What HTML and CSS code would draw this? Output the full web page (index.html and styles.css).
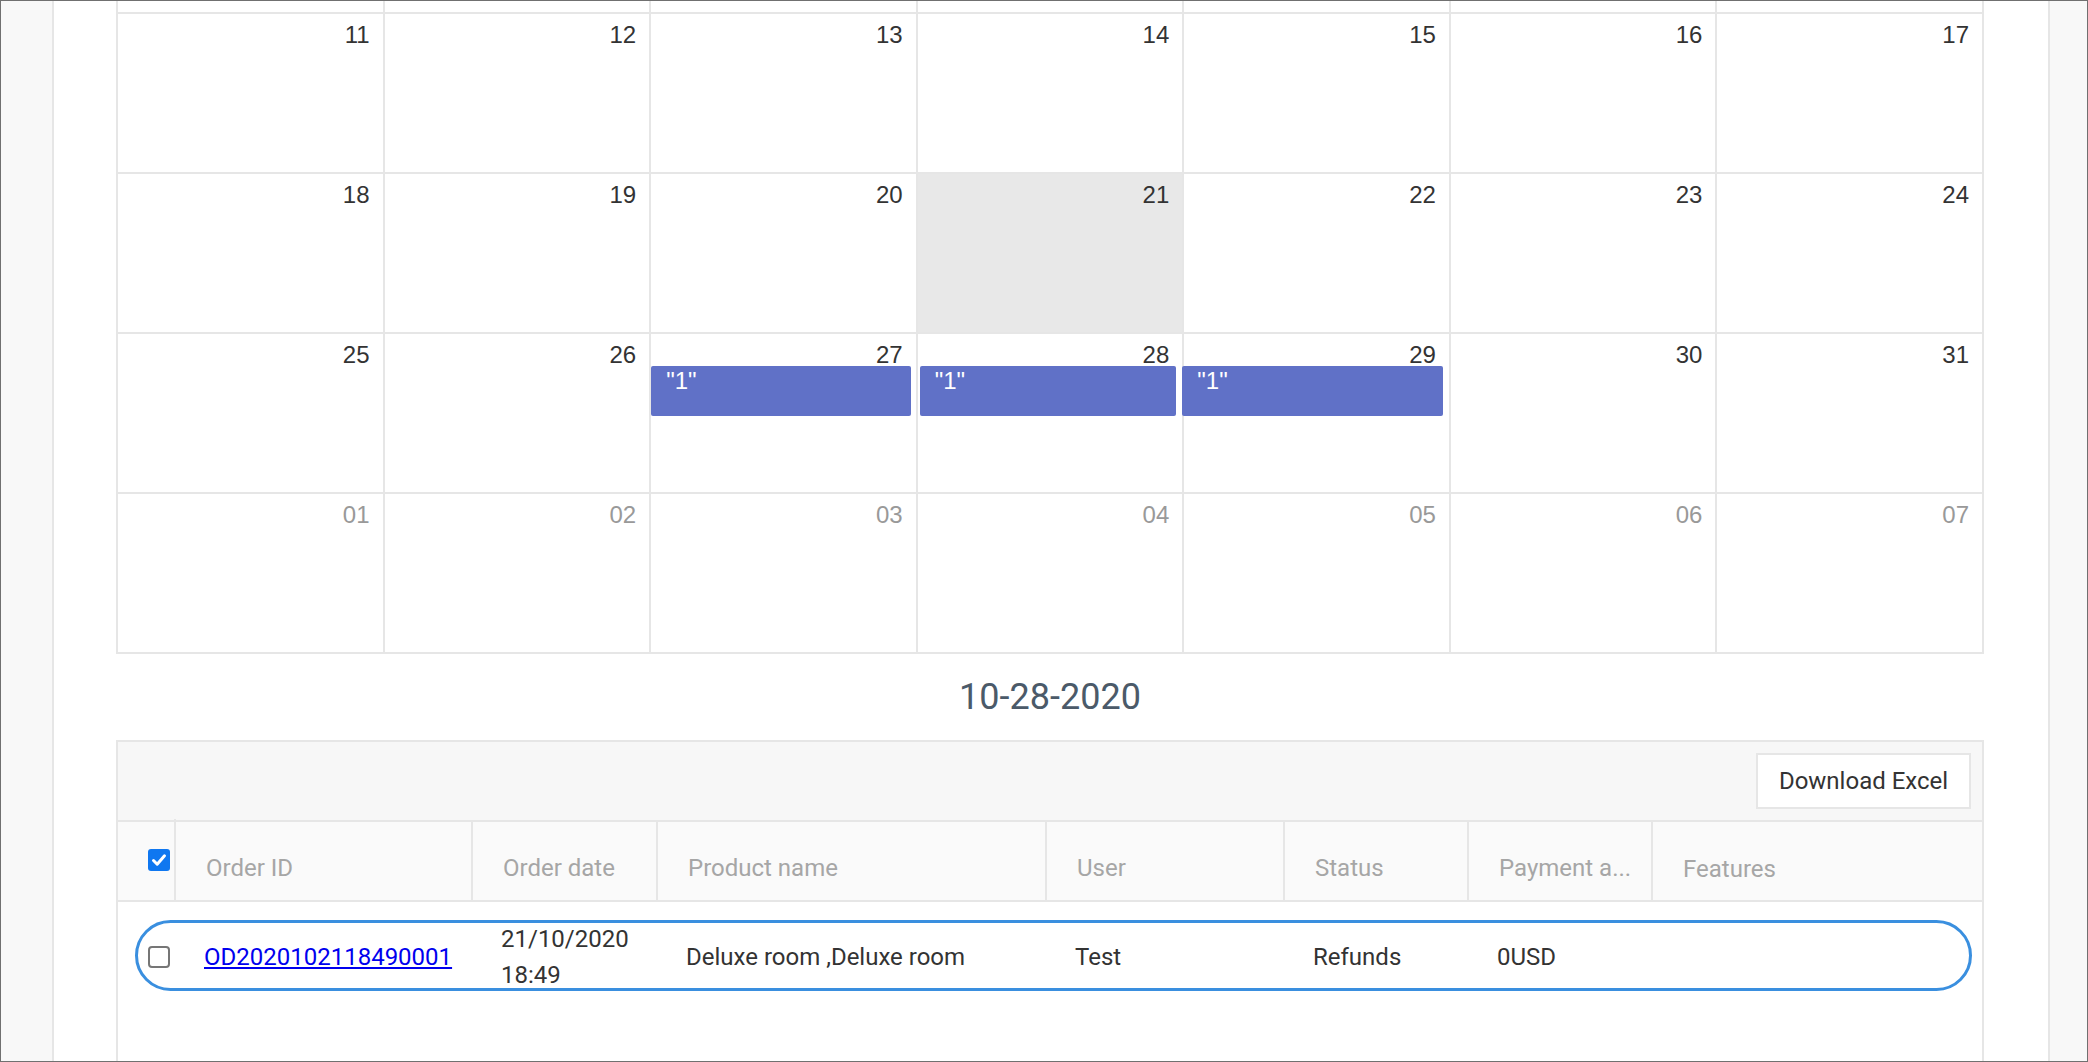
FILE: index.html
```html
<!DOCTYPE html>
<html lang="en">
<head>
<meta charset="utf-8">
<title>Orders calendar</title>
<link rel="stylesheet" href="styles.css">
</head>
<body>
<div class="frame">
  <aside class="gutter gutter-left"></aside>
  <main class="content">
    <div class="calendar">
      <div class="cell partial"></div><div class="cell partial"></div><div class="cell partial"></div><div class="cell partial"></div><div class="cell partial"></div><div class="cell partial"></div><div class="cell partial"></div>

      <div class="cell"><div class="num">11</div></div>
      <div class="cell"><div class="num">12</div></div>
      <div class="cell"><div class="num">13</div></div>
      <div class="cell"><div class="num">14</div></div>
      <div class="cell"><div class="num">15</div></div>
      <div class="cell"><div class="num">16</div></div>
      <div class="cell"><div class="num">17</div></div>

      <div class="cell"><div class="num">18</div></div>
      <div class="cell"><div class="num">19</div></div>
      <div class="cell"><div class="num">20</div></div>
      <div class="cell today"><div class="num">21</div></div>
      <div class="cell"><div class="num">22</div></div>
      <div class="cell"><div class="num">23</div></div>
      <div class="cell"><div class="num">24</div></div>

      <div class="cell"><div class="num">25</div></div>
      <div class="cell"><div class="num">26</div></div>
      <div class="cell"><div class="num">27</div><div class="event">"1"</div></div>
      <div class="cell"><div class="num">28</div><div class="event ev-mid">"1"</div></div>
      <div class="cell"><div class="num">29</div><div class="event ev-last">"1"</div></div>
      <div class="cell"><div class="num">30</div></div>
      <div class="cell"><div class="num">31</div></div>

      <div class="cell other"><div class="num">01</div></div>
      <div class="cell other"><div class="num">02</div></div>
      <div class="cell other"><div class="num">03</div></div>
      <div class="cell other"><div class="num">04</div></div>
      <div class="cell other"><div class="num">05</div></div>
      <div class="cell other"><div class="num">06</div></div>
      <div class="cell other"><div class="num">07</div></div>
    </div>

    <h2 class="day-title">10-28-2020</h2>

    <section class="orders">
      <div class="toolbar">
        <button class="btn" type="button">Download Excel</button>
      </div>
      <div class="thead cols">
        <div class="th th-check"><span class="cbox checked"><svg viewBox="0 0 22 22" width="22" height="22"><path d="M5.5 11.5 L9.2 15.2 L16.5 6.8" fill="none" stroke="#fff" stroke-width="3" stroke-linecap="round" stroke-linejoin="round"/></svg></span></div>
        <div class="th">Order ID</div>
        <div class="th">Order date</div>
        <div class="th">Product name</div>
        <div class="th">User</div>
        <div class="th">Status</div>
        <div class="th">Payment a...</div>
        <div class="th th-last">Features</div>
      </div>
      <div class="tbody">
        <div class="row cols">
          <div class="td td-check"><span class="cbox"></span></div>
          <div class="td"><a class="order-link" href="#">OD2020102118490001</a></div>
          <div class="td td-date">21/10/2020 18:49</div>
          <div class="td">Deluxe room ,Deluxe room</div>
          <div class="td">Test</div>
          <div class="td">Refunds</div>
          <div class="td">0USD</div>
          <div class="td"></div>
        </div>
      </div>
    </section>
  </main>
  <aside class="gutter gutter-right"></aside>
</div>
</body>
</html>
```
FILE: styles.css
```css
html, body {
  margin: 0;
  padding: 0;
  background: #ffffff;
}

.frame {
  box-sizing: border-box;
  width: 2088px;
  height: 1062px;
  border: 1px solid #707070;
  display: flex;
  overflow: hidden;
  font-family: Roboto, "Liberation Sans", sans-serif;
}

.gutter {
  background: #f8f8f8;
  flex: none;
}

.gutter-left {
  width: 51px;
  border-right: 2px solid #e6e6e6;
}

.gutter-right {
  width: 37px;
  border-left: 2px solid #e6e6e6;
}

.content {
  flex: 1;
  min-width: 0;
  padding: 0 64px 0 62px;
  background: #ffffff;
  display: flex;
  flex-direction: column;
}

/* Calendar */
.calendar {
  display: grid;
  grid-template-columns: repeat(7, 1fr);
  border-right: 2px solid #e6e6e6;
}

.cell {
  height: 158px;
  border-left: 2px solid #e6e6e6;
  border-bottom: 2px solid #e6e6e6;
  min-width: 0;
}

.cell.partial {
  height: 11px;
}

.cell.today {
  background: #e8e8e8;
}

.num {
  text-align: right;
  padding: 10px 13px 0 0;
  font-family: "Liberation Sans", Arial, sans-serif;
  font-size: 24px;
  line-height: 22px;
  color: #333333;
}

.cell.other .num {
  color: #999999;
}

.event {
  box-sizing: border-box;
  height: 50px;
  margin: 0 5px 0 0;
  padding: 3px 15px 0;
  background: #6071c7;
  border-radius: 2px;
  color: #ffffff;
  font-family: "Liberation Sans", Arial, sans-serif;
  font-size: 24px;
  line-height: 24px;
}

.event.ev-mid {
  margin-left: 2px;
  margin-right: 6px;
}

.event.ev-last {
  margin-left: -2px;
  margin-right: 6px;
}

/* Title */
.day-title {
  margin: 0;
  height: 86px;
  line-height: 86px;
  text-align: center;
  font-family: Roboto, sans-serif;
  font-weight: 400;
  font-size: 36px;
  color: #4b5a69;
  flex: none;
}

/* Orders table */
.orders {
  flex: 1;
  border: 2px solid #e6e6e6;
  border-bottom: none;
  font-family: Roboto, sans-serif;
  font-size: 24px;
}

.toolbar {
  height: 78px;
  background: #f7f7f7;
  border-bottom: 2px solid #e6e6e6;
  display: flex;
  justify-content: flex-end;
  align-items: center;
  padding: 0 11px;
}

.btn {
  box-sizing: border-box;
  width: 215px;
  height: 56px;
  padding: 0;
  border: 2px solid #e6e6e6;
  border-radius: 0;
  background: #ffffff;
  font-family: Roboto, sans-serif;
  font-size: 24px;
  line-height: 52px;
  color: #333333;
}

.cols {
  display: grid;
  grid-template-columns: 58px 297px 185px 389px 238px 184px 184px 329px;
}

.thead {
  height: 78px;
  background: #fafafa;
  border-bottom: 2px solid #e6e6e6;
}

.th {
  border-right: 2px solid #e6e6e6;
  padding: 14px 0 0 30px;
  line-height: 64px;
  color: #a6a6a6;
  white-space: nowrap;
  min-width: 0;
}

.th.th-last {
  border-right: none;
  padding-top: 16px;
  line-height: 62px;
}

.th.th-check {
  padding: 0 0 0 30px;
  display: flex;
  align-items: center;
  margin-top: -3px;
}

.cbox {
  box-sizing: border-box;
  display: block;
  width: 22px;
  height: 22px;
  border: 2px solid #767676;
  border-radius: 4px;
  background: #ffffff;
}

.cbox.checked {
  border: none;
  border-radius: 3px;
  background: #0f77f0;
}

.cbox svg {
  display: block;
}

.tbody {
  padding-top: 19px;
}

.row {
  position: relative;
  height: 72px;
  align-items: center;
}

.row::after {
  content: "";
  position: absolute;
  top: -1px;
  left: 17px;
  right: 10px;
  height: 71px;
  box-sizing: border-box;
  border: 3px solid #3a8fdf;
  border-radius: 36px;
  pointer-events: none;
}

.td {
  padding-left: 28px;
  color: #333333;
  min-width: 0;
}

.td.td-check {
  padding-left: 30px;
}

.td.td-date {
  line-height: 36px;
}

.order-link {
  color: #0000ee;
  text-decoration: underline;
}
```
